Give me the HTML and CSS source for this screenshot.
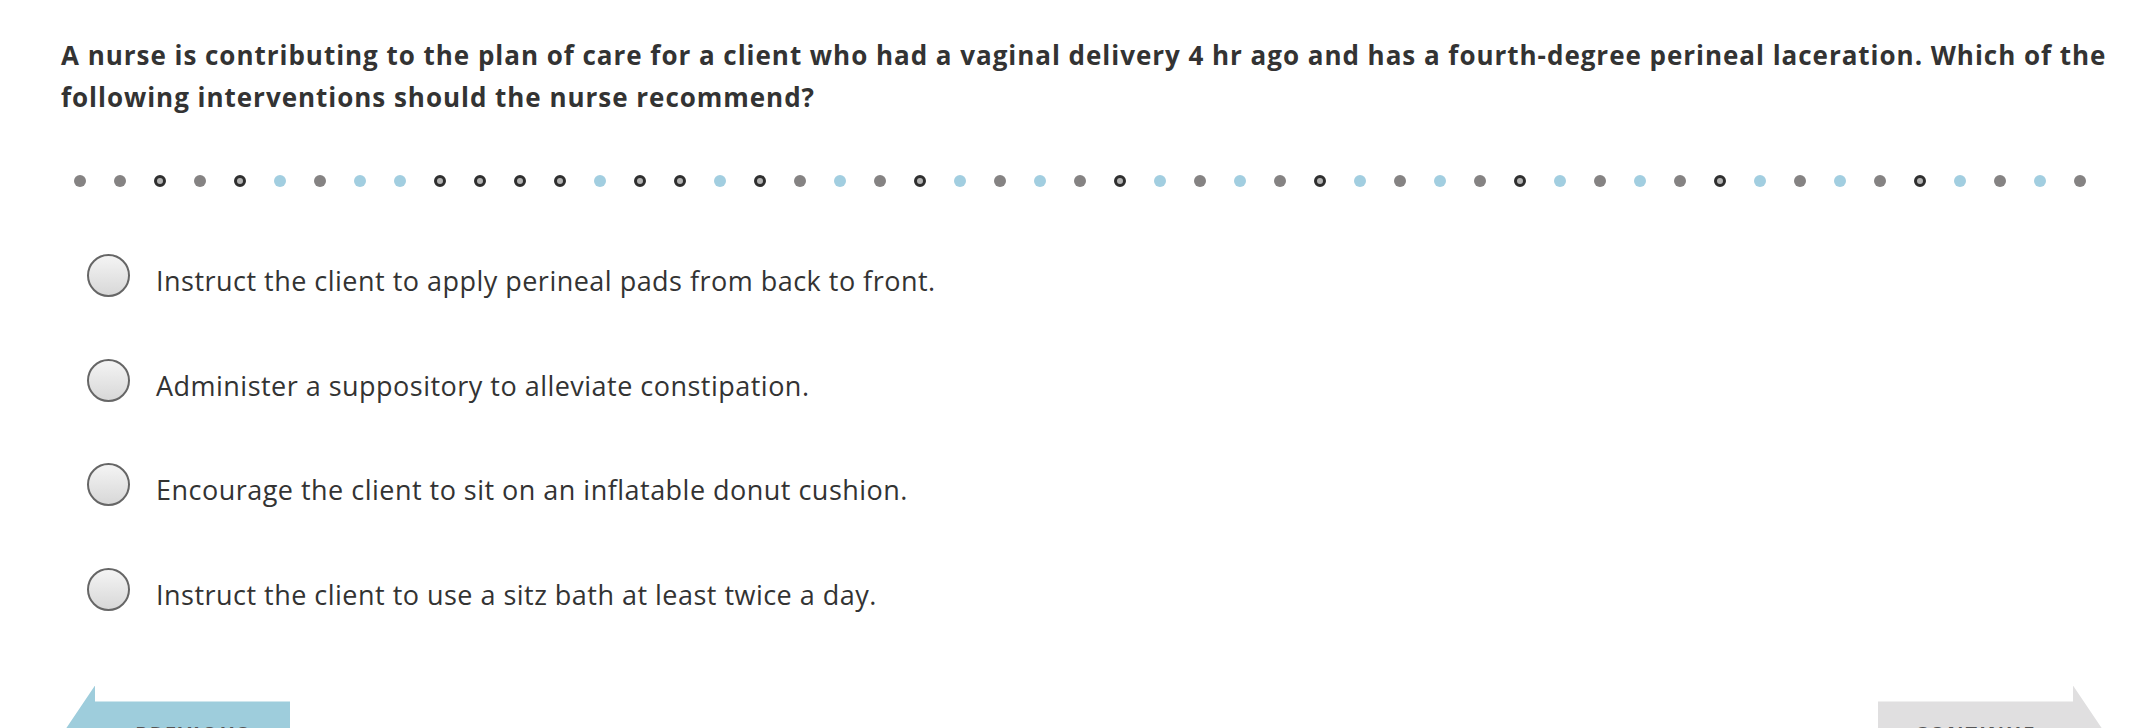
FILE: index.html
```html
<!DOCTYPE html>
<html lang="en">
<head>
<meta charset="utf-8">
<title>Question</title>
<link rel="stylesheet" href="styles.css">
</head>
<body>
<main class="page">
  <h1 class="question">A nurse is contributing to the plan of care for a client who had a vaginal delivery 4 hr ago and has a fourth-degree perineal laceration. Which of the following interventions should the nurse recommend?</h1>

  <div class="progress" id="progress"></div>

  <ul class="options">
    <li class="option"><span class="radio"></span><span class="label">Instruct the client to apply perineal pads from back to front.</span></li>
    <li class="option"><span class="radio"></span><span class="label">Administer a suppository to alleviate constipation.</span></li>
    <li class="option"><span class="radio"></span><span class="label">Encourage the client to sit on an inflatable donut cushion.</span></li>
    <li class="option"><span class="radio"></span><span class="label">Instruct the client to use a sitz bath at least twice a day.</span></li>
  </ul>

  <nav class="nav">
    <button class="nav-btn prev"><span>PREVIOUS</span></button>
    <button class="nav-btn next"><span>CONTINUE</span></button>
  </nav>
</main>
<script>
  var seq = "ggrgrbgbbrrrrbrrbrgbgrbgbgrbgbgrbgbgrbgbgrbgbgrbgbg";
  var p = document.getElementById('progress');
  for (var i = 0; i < 51; i++) {
    var d = document.createElement('span');
    var c = seq.charAt(i);
    d.className = 'dot ' + (c === 'g' ? 'done' : c === 'b' ? 'flag' : 'cur');
    p.appendChild(d);
  }
</script>
</body>
</html>
```

FILE: styles.css
```css
html, body {
  margin: 0;
  padding: 0;
  background: #ffffff;
}

body {
  font-family: "Open Sans", "Liberation Sans", sans-serif;
  color: #333333;
}

.page {
  padding: 34px 30px 0 61px;
}

.question {
  margin: 0;
  font-size: 26px;
  font-weight: 700;
  letter-spacing: 0.97px;
  line-height: 42px;
  color: #333333;
}

.progress {
  display: flex;
  gap: 28px;
  margin: 57px 0 0 13px;
  height: 12px;
}

.dot {
  width: 12px;
  height: 12px;
  border-radius: 50%;
  box-sizing: border-box;
  flex: none;
}

.dot.done { background: #858383; }
.dot.flag { background: #a2cee0; }
.dot.cur {
  background: #b4b4b4;
  border: 3px solid #2f2f2f;
}

.options {
  list-style: none;
  margin: 67px 0 0 26px;
  padding: 0;
  display: flex;
  flex-direction: column;
  gap: 59.5px;
}

.option {
  display: flex;
  align-items: flex-start;
  gap: 26px;
  height: 45px;
}

.radio {
  flex: none;
  width: 43px;
  height: 43px;
  box-sizing: border-box;
  border-radius: 50%;
  border: 2px solid #666666;
  background: linear-gradient(#f4f4f4, #d8d8d8);
}

.label {
  margin-top: 9px;
  font-size: 27px;
  letter-spacing: 0.48px;
  line-height: 36px;
  color: #333333;
}

.nav {
  display: flex;
  justify-content: space-between;
  margin: 73px 18px 0 3px;
}

.nav-btn {
  border: 0;
  padding: 3px 0 0 0;
  width: 226px;
  height: 92px;
  font-family: "Open Sans", "Liberation Sans", sans-serif;
  font-weight: 700;
  font-size: 20px;
  letter-spacing: 2px;
  color: #555555;
  display: flex;
  align-items: center;
}

.nav-btn.prev {
  background: #9ecddc;
  clip-path: polygon(0 46px, 31px 0, 31px 16px, 226px 16px, 226px 76px, 31px 76px, 31px 92px);
  padding-left: 31px;
}

.nav-btn.next {
  background: #e0dfe0;
  clip-path: polygon(0 16px, 195px 16px, 195px 0, 226px 46px, 195px 92px, 195px 76px, 0 76px);
  padding-right: 31px;
}

.nav-btn span {
  flex: 1;
  text-align: center;
}
```
